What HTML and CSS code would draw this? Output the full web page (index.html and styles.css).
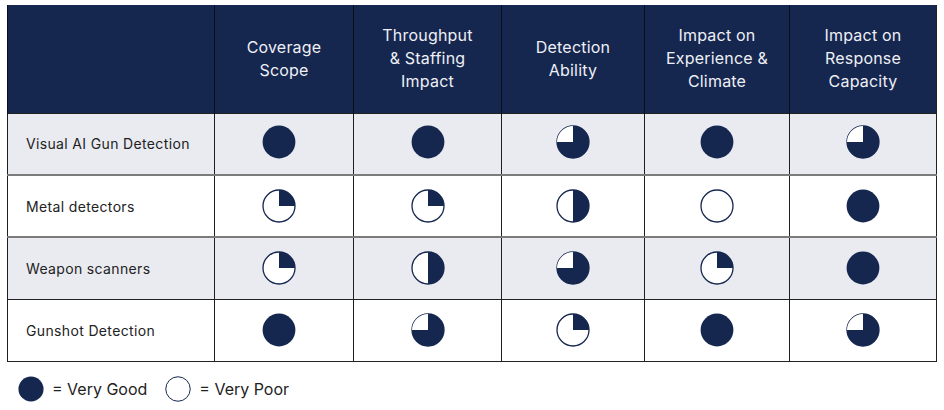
FILE: index.html
```html
<!DOCTYPE html>
<html lang="en">
<head>
<meta charset="utf-8">
<title>Comparison</title>
<link rel="stylesheet" href="styles.css">
</head>
<body>
<svg class="defs" width="0" height="0" aria-hidden="true">
  <defs>
    <symbol id="full" viewBox="0 0 34 34"><circle cx="17" cy="17" r="16.4" fill="#15264f"/></symbol>
    <symbol id="empty" viewBox="0 0 34 34"><circle cx="17" cy="17" r="16" fill="#fff" stroke="#15264f" stroke-width="1.3"/></symbol>
    <symbol id="q1" viewBox="0 0 34 34"><circle cx="17" cy="17" r="16" fill="#fff" stroke="#15264f" stroke-width="1.3"/><path d="M17 17 L17 1 A16 16 0 0 1 33 17 Z" fill="#15264f"/></symbol>
    <symbol id="half" viewBox="0 0 34 34"><circle cx="17" cy="17" r="16" fill="#fff" stroke="#15264f" stroke-width="1.3"/><path d="M17 1 A16 16 0 0 1 17 33 Z" fill="#15264f"/></symbol>
    <symbol id="q3" viewBox="0 0 34 34"><circle cx="17" cy="17" r="16" fill="#15264f" stroke="#15264f" stroke-width="1.3"/><path d="M17 17 L1 17 A16 16 0 0 1 17 1 Z" fill="#fff"/></symbol>
  </defs>
</svg>
<table class="cmp">
  <colgroup>
    <col class="c0"><col class="c1"><col class="c2"><col class="c3"><col class="c4"><col class="c5">
  </colgroup>
  <thead>
    <tr>
      <th></th>
      <th>Coverage<br>Scope</th>
      <th>Throughput<br>&amp; Staffing<br>Impact</th>
      <th>Detection<br>Ability</th>
      <th>Impact on<br>Experience &amp;<br>Climate</th>
      <th>Impact on<br>Response<br>Capacity</th>
    </tr>
  </thead>
  <tbody>
    <tr class="shade soft first">
      <td class="name">Visual AI Gun Detection</td>
      <td class="k1"><svg class="pie"><use href="#full"/></svg></td>
      <td><svg class="pie"><use href="#full"/></svg></td>
      <td><svg class="pie"><use href="#q3"/></svg></td>
      <td><svg class="pie"><use href="#full"/></svg></td>
      <td><svg class="pie"><use href="#q3"/></svg></td>
    </tr>
    <tr class="soft">
      <td class="name">Metal detectors</td>
      <td class="k1"><svg class="pie"><use href="#q1"/></svg></td>
      <td><svg class="pie"><use href="#q1"/></svg></td>
      <td><svg class="pie"><use href="#half"/></svg></td>
      <td><svg class="pie"><use href="#empty"/></svg></td>
      <td><svg class="pie"><use href="#full"/></svg></td>
    </tr>
    <tr class="shade">
      <td class="name">Weapon scanners</td>
      <td class="k1"><svg class="pie"><use href="#q1"/></svg></td>
      <td><svg class="pie"><use href="#half"/></svg></td>
      <td><svg class="pie"><use href="#q3"/></svg></td>
      <td><svg class="pie"><use href="#q1"/></svg></td>
      <td><svg class="pie"><use href="#full"/></svg></td>
    </tr>
    <tr>
      <td class="name">Gunshot Detection</td>
      <td class="k1"><svg class="pie"><use href="#full"/></svg></td>
      <td><svg class="pie"><use href="#q3"/></svg></td>
      <td><svg class="pie"><use href="#q1"/></svg></td>
      <td><svg class="pie"><use href="#full"/></svg></td>
      <td><svg class="pie"><use href="#q3"/></svg></td>
    </tr>
  </tbody>
</table>
<div class="legend">
  <span class="item"><svg class="lpie"><use href="#full"/></svg>= Very Good</span>
  <span class="item"><svg class="lpie"><use href="#empty"/></svg>= Very Poor</span>
</div>
</body>
</html>
```
FILE: styles.css
```css
html, body {
  margin: 0;
  background: #ffffff;
}
body {
  padding: 5px 0 0 7px;
  font-family: "Inter", "Lato", sans-serif;
  color: #222222;
}
.defs {
  position: absolute;
  width: 0;
  height: 0;
  overflow: hidden;
}
.cmp {
  border-collapse: collapse;
  table-layout: fixed;
  width: 929px;
  border-left: 1px solid #222;
  border-right: 1px solid #222;
  border-bottom: 1px solid #222;
}
.c0 { width: 207px; }
.c1 { width: 139px; }
.c2 { width: 148px; }
.c3 { width: 143px; }
.c4 { width: 145px; }
.c5 { width: 147px; }
.cmp th {
  background: #15264f;
  color: #eef0f5;
  font-weight: 400;
  font-size: 16px;
  letter-spacing: 0.2px;
  line-height: 23px;
  height: 108px;
  padding: 0;
  text-align: center;
  vertical-align: middle;
  border-left: 1px solid #0b0f1c;
  box-sizing: border-box;
}
.cmp td {
  height: 62px;
  padding: 0;
  text-align: center;
  vertical-align: middle;
  border-left: 1px solid #1e1e1e;
  border-top: 1px solid #222;
  box-sizing: border-box;
}
.cmp td.k1 {
  padding-right: 10px;
}
.cmp tr.first td:not(.name) {
  padding-bottom: 3px;
}
.cmp tr.soft td {
  border-bottom: 2px solid #7b7b7b;
}
.cmp tr.shade td {
  background: #e9ebf1;
}
.cmp td.name {
  text-align: left;
  padding-left: 18px;
  font-size: 14px;
  letter-spacing: 0.35px;
  color: #222;
}
.pie {
  display: block;
  width: 34px;
  height: 34px;
  margin: 0 auto;
}
.legend {
  display: flex;
  gap: 18px;
  margin-top: 14px;
  padding-left: 11px;
  font-size: 16px;
  color: #222;
}
.item {
  display: flex;
  align-items: center;
  gap: 8px;
}
.lpie {
  width: 26px;
  height: 26px;
}
```
